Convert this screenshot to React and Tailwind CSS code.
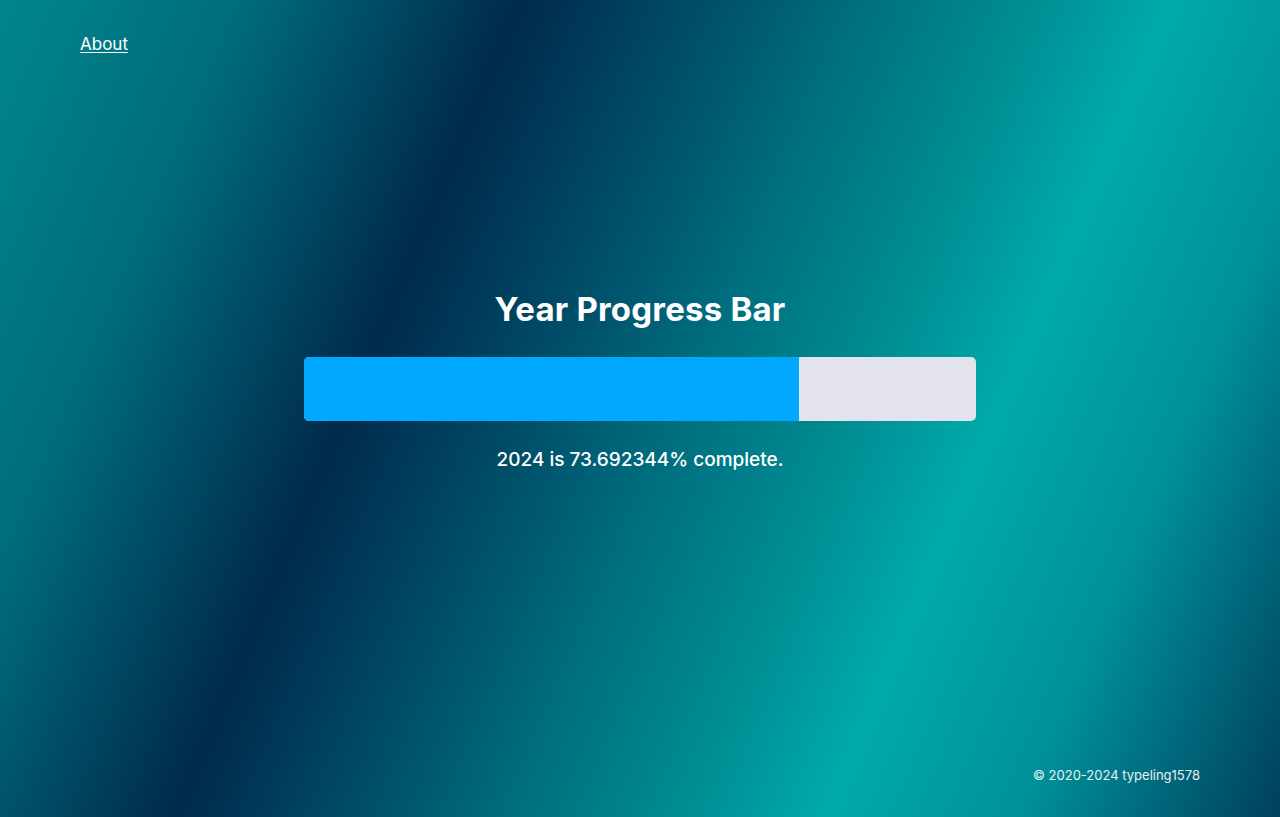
import React from 'react';

const progress = 73.692344;

const App = () => {
  return (
    <div className="relative h-[817px] w-full overflow-hidden bg-[linear-gradient(113deg,#00868c_0%,#006c7b_15%,#002a4c_32%,#00506a_44%,#006f80_53%,#008c93_63%,#00aaaa_72%,#009099_84%,#003f5e_100%)] font-['Inter',sans-serif] text-white">
      <div className="flex h-full flex-col">
        <header className="px-20 pt-[32px]">
          <a href="#" className="text-[17px] underline underline-offset-2">
            About
          </a>
        </header>

        <main className="flex flex-1 flex-col items-center pt-[228px]">
          <h1 className="text-[33px] font-bold leading-[46px] tracking-[0.2px]">Year Progress Bar</h1>
          <div className="mt-[25px] flex h-16 w-[672px] overflow-hidden rounded-[5px] bg-[#e2e3ec]">
            <div className="h-full bg-[#00a8ff]" style={{ width: `${progress}%` }} />
          </div>
          <p className="mt-[25px] text-[19px] font-medium leading-[28px]">2024 is {progress}% complete.</p>
        </main>

        <footer className="flex justify-end px-20 pb-[32px]">
          <span className="text-[13px] text-white/90">© 2020-2024 typeling1578</span>
        </footer>
      </div>
    </div>
  );
};

export default App;
